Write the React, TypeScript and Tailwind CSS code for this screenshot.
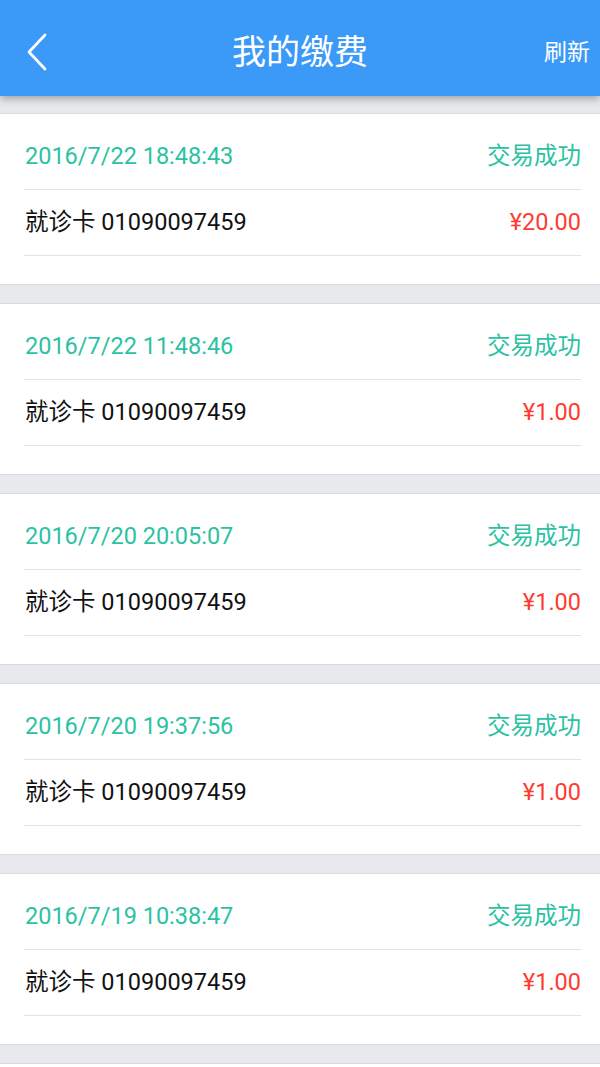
const payments = [
    { time: '2016/7/22 18:48:43', card: '01090097459', amount: '¥20.00' },
    { time: '2016/7/22 11:48:46', card: '01090097459', amount: '¥1.00' },
    { time: '2016/7/20 20:05:07', card: '01090097459', amount: '¥1.00' },
    { time: '2016/7/20 19:37:56', card: '01090097459', amount: '¥1.00' },
    { time: '2016/7/19 10:38:47', card: '01090097459', amount: '¥1.00' },
];

const font = "font-['Roboto','Noto_Sans_CJK_SC',sans-serif]";

const PaymentCard = ({ time, card, amount }: { time: string; card: string; amount: string }) => (
    <div className="bg-white border-y border-[#d8d9de] pl-6 pr-[19px]">
        <div className="flex justify-between pt-[29px] pb-[20px] leading-[26px] border-b border-[#e1e2e6]">
            <span className="text-[23.5px] text-[#2bc2a3] pl-[1px]">{time}</span>
            <span className="text-[23.5px] text-[#2bc2a3]">交易成功</span>
        </div>
        <div className="flex justify-between pt-[19px] pb-[20px] leading-[26px] border-b border-[#e1e2e6]">
            <span className="text-[23.5px] text-[#111111] pl-[1px]">就诊卡 {card}</span>
            <span className="text-[23.5px] text-[#ff3b30]">{amount}</span>
        </div>
        <div className="h-[28px]" />
    </div>
);

const App = () => {
    return (
        <div className={`${font} w-[600px] h-[1067px] overflow-hidden bg-[#e8e9ed]`}>
            <div className="relative z-10 h-[96px] bg-[#3b9af8] grid grid-cols-[1fr_auto_1fr] items-center pt-[8px] shadow-[0_3px_8px_rgba(0,0,0,0.3)]">
                <div className="pl-[26px]">
                    <svg width="22" height="38" viewBox="0 0 22 38" fill="none">
                        <polyline points="19,2 3,19 19,36" stroke="white" strokeWidth="2.8" strokeLinecap="round" strokeLinejoin="round" />
                    </svg>
                </div>
                <h1 className="text-[34px] text-white leading-none">我的缴费</h1>
                <div className="flex justify-end pr-[10px]">
                    <span className="text-[23px] text-white leading-none">刷新</span>
                </div>
            </div>
            <div className="flex flex-col gap-[18px] pt-[17px]">
                {payments.map((p) => (
                    <PaymentCard key={p.time} {...p} />
                ))}
                <div className="h-[40px] bg-white border-t border-[#d8d9de]" />
            </div>
        </div>
    );
};

export default App;
